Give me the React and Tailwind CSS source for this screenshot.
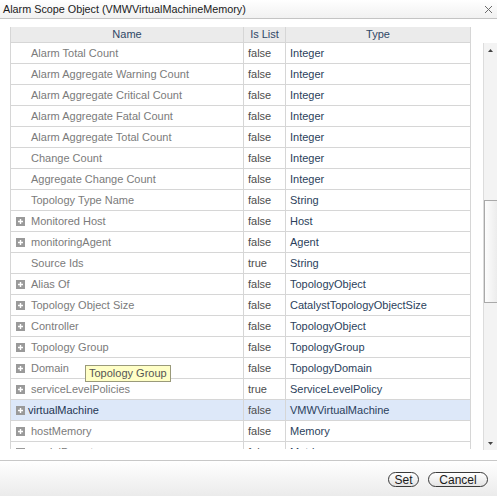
import React from 'react';

const ROWS = [
  { name: 'Alarm Total Count', list: 'false', type: 'Integer' },
  { name: 'Alarm Aggregate Warning Count', list: 'false', type: 'Integer' },
  { name: 'Alarm Aggregate Critical Count', list: 'false', type: 'Integer' },
  { name: 'Alarm Aggregate Fatal Count', list: 'false', type: 'Integer' },
  { name: 'Alarm Aggregate Total Count', list: 'false', type: 'Integer' },
  { name: 'Change Count', list: 'false', type: 'Integer' },
  { name: 'Aggregate Change Count', list: 'false', type: 'Integer' },
  { name: 'Topology Type Name', list: 'false', type: 'String' },
  { name: 'Monitored Host', list: 'false', type: 'Host', expand: true },
  { name: 'monitoringAgent', list: 'false', type: 'Agent', expand: true },
  { name: 'Source Ids', list: 'true', type: 'String' },
  { name: 'Alias Of', list: 'false', type: 'TopologyObject', expand: true },
  { name: 'Topology Object Size', list: 'false', type: 'CatalystTopologyObjectSize', expand: true },
  { name: 'Controller', list: 'false', type: 'TopologyObject', expand: true },
  { name: 'Topology Group', list: 'false', type: 'TopologyGroup', expand: true },
  { name: 'Domain', list: 'false', type: 'TopologyDomain', expand: true },
  { name: 'serviceLevelPolicies', list: 'true', type: 'ServiceLevelPolicy', expand: true },
  { name: 'virtualMachine', list: 'false', type: 'VMWVirtualMachine', expand: true, selected: true },
  { name: 'hostMemory', list: 'false', type: 'Memory', expand: true },
  { name: 'modelParent', list: 'false', type: 'Metric', expand: true },
];

function PlusBox() {
  return (
    <svg width="9" height="9" viewBox="0 0 9 9" className="flex-shrink-0">
      <rect x="0" y="0" width="9" height="9" fill="#9a9a9a" />
      <path d="M2 4.5h5M4.5 2v5" stroke="#fff" strokeWidth="1.4" />
    </svg>
  );
}

function Row({ row }) {
  const bg = row.selected ? 'bg-[#dde8f9]' : 'bg-white';
  return (
    <div className={`flex h-[21px] border-b border-[#d6d6d6] ${bg}`}>
      <div className="w-[233px] flex items-center border-r border-[#d6d6d6] pl-[5px] gap-[6px]">
        {row.expand ? <PlusBox /> : <span className="w-[9px]" />}
        <span className={row.selected ? 'text-[#1f3653] -ml-[3px]' : 'text-[#7b7b7b]'}>{row.name}</span>
      </div>
      <div className="w-[42px] flex items-center border-r border-[#d6d6d6] pl-[4px] text-[#4d4d4d]">{row.list}</div>
      <div className="flex-1 flex items-center pl-[4px] text-[#2b3f5c]">{row.type}</div>
    </div>
  );
}

export default function App() {
  return (
    <div
      className="relative w-[497px] h-[496px] bg-white flex flex-col overflow-hidden text-[11px]"
      style={{ fontFamily: '"Liberation Sans", Arial, sans-serif' }}
    >
      {/* Title bar */}
      <div className="h-[19px] flex-shrink-0 flex items-center justify-between pl-[3px] pr-[4px] border-b border-[#c4c4c4] bg-gradient-to-b from-white to-[#f1f1f1]">
        <span className="text-[#1a1a1a] text-[10.8px]">Alarm Scope Object (VMWVirtualMachineMemory)</span>
        <svg width="9" height="9" viewBox="0 0 9 9">
          <path d="M1 1l7 7M8 1l-7 7" stroke="#6b6b6b" strokeWidth="1" />
        </svg>
      </div>

      {/* Body */}
      <div className="flex pt-[8px] pl-[10px]">
        <div className="w-[461px] h-[422px] overflow-hidden border-l border-r border-[#d6d6d6]">
          <div className="flex h-[16px] bg-[#ebebeb] border-b border-[#d6d6d6] text-[#2f4866]">
            <div className="w-[233px] flex items-center justify-center border-r border-[#d6d6d6]">Name</div>
            <div className="w-[42px] flex items-center justify-center border-r border-[#d6d6d6]">Is List</div>
            <div className="flex-1 flex items-center justify-center">Type</div>
          </div>
          {ROWS.map(r => <Row key={r.name} row={r} />)}
        </div>

        {/* Scrollbar */}
        <div className="ml-[12px] mt-[16px] w-[14px] h-[407px] flex flex-col bg-[#f3f3f3] border-l border-[#dcdcdc]">
          <div className="h-[14px] flex items-center justify-center">
            <svg width="5" height="3" viewBox="0 0 5 3"><path d="M0 3L2.5 0L5 3z" fill="#444" /></svg>
          </div>
          <div className="h-[143px]" />
          <div className="h-[103px] bg-gradient-to-r from-[#fdfdfd] to-[#ececec] border border-r-0 border-[#a9a9a9]" />
          <div className="flex-1" />
          <div className="h-[14px] flex items-center justify-center">
            <svg width="5" height="3" viewBox="0 0 5 3"><path d="M0 0L2.5 3L5 0z" fill="#444" /></svg>
          </div>
        </div>
      </div>

      {/* Footer */}
      <div className="mt-[10px] flex-1 border-t border-[#c8c8c8] bg-gradient-to-b from-white to-[#ebebeb] flex items-center justify-end gap-[9px] pr-[9px] pt-[2px]">
        <button className="w-[31px] h-[15px] rounded-full border border-[#3a3a3a] bg-gradient-to-b from-white to-[#e4e4e4] text-[#1a1a1a] text-[12px] leading-none flex items-center justify-center">Set</button>
        <button className="w-[60px] h-[15px] rounded-full border border-[#3a3a3a] bg-gradient-to-b from-white to-[#e4e4e4] text-[#1a1a1a] text-[12px] leading-none flex items-center justify-center">Cancel</button>
      </div>

      {/* Tooltip */}
      <div className="absolute left-[85px] top-[365px] h-[17px] px-[3px] flex items-center bg-[#ffffc6] border border-[#9a9a7a] text-[#555] whitespace-nowrap">
        Topology Group
      </div>
    </div>
  );
}
